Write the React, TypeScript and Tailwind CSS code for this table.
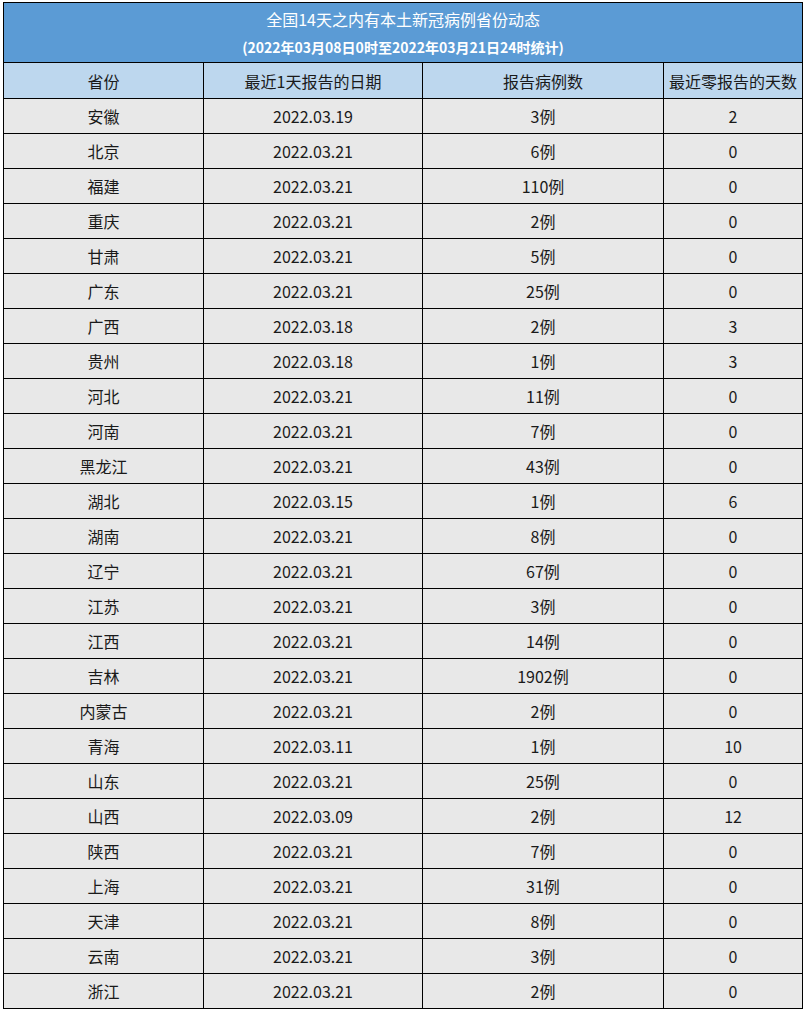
const rows: [string, string, string, string][] = [
  ['安徽', '2022.03.19', '3例', '2'],
  ['北京', '2022.03.21', '6例', '0'],
  ['福建', '2022.03.21', '110例', '0'],
  ['重庆', '2022.03.21', '2例', '0'],
  ['甘肃', '2022.03.21', '5例', '0'],
  ['广东', '2022.03.21', '25例', '0'],
  ['广西', '2022.03.18', '2例', '3'],
  ['贵州', '2022.03.18', '1例', '3'],
  ['河北', '2022.03.21', '11例', '0'],
  ['河南', '2022.03.21', '7例', '0'],
  ['黑龙江', '2022.03.21', '43例', '0'],
  ['湖北', '2022.03.15', '1例', '6'],
  ['湖南', '2022.03.21', '8例', '0'],
  ['辽宁', '2022.03.21', '67例', '0'],
  ['江苏', '2022.03.21', '3例', '0'],
  ['江西', '2022.03.21', '14例', '0'],
  ['吉林', '2022.03.21', '1902例', '0'],
  ['内蒙古', '2022.03.21', '2例', '0'],
  ['青海', '2022.03.11', '1例', '10'],
  ['山东', '2022.03.21', '25例', '0'],
  ['山西', '2022.03.09', '2例', '12'],
  ['陕西', '2022.03.21', '7例', '0'],
  ['上海', '2022.03.21', '31例', '0'],
  ['天津', '2022.03.21', '8例', '0'],
  ['云南', '2022.03.21', '3例', '0'],
  ['浙江', '2022.03.21', '2例', '0'],
];

export default function App() {
  return (
    <div
      className="min-h-[1012px] w-[804px] bg-white pl-[3px] pt-[2px]"
      style={{ fontFamily: '"Noto Sans CJK SC", "Noto Sans", sans-serif' }}
    >
      <table className="w-[799px] table-fixed border-collapse border border-black text-[16px] text-[#1a1a1a]">
        <colgroup>
          <col className="w-[200px]" />
          <col className="w-[219px]" />
          <col className="w-[241px]" />
          <col className="w-[139px]" />
        </colgroup>
        <thead>
          <tr>
            <th colSpan={4} className="h-[60px] border border-black bg-[#5b9bd5] p-0 font-normal text-white">
              <div className="text-[16px] leading-[29px]">全国14天之内有本土新冠病例省份动态</div>
              <div className="text-[14px] font-semibold leading-[27px]">(2022年03月08日0时至2022年03月21日24时统计)</div>
            </th>
          </tr>
          <tr className="bg-[#bdd7ee]">
            <th className="h-[36px] border border-black p-0 font-normal">省份</th>
            <th className="h-[36px] border border-black p-0 font-normal">最近1天报告的日期</th>
            <th className="h-[36px] border border-black p-0 font-normal">报告病例数</th>
            <th className="h-[36px] border border-black p-0 font-normal">最近零报告的天数</th>
          </tr>
        </thead>
        <tbody>
          {rows.map((r) => (
            <tr key={r[0]} className="bg-[#e8e8e8]">
              {r.map((c, i) => (
                <td key={i} className="h-[35px] border border-black p-0 text-center">
                  {c}
                </td>
              ))}
            </tr>
          ))}
        </tbody>
      </table>
    </div>
  );
}
